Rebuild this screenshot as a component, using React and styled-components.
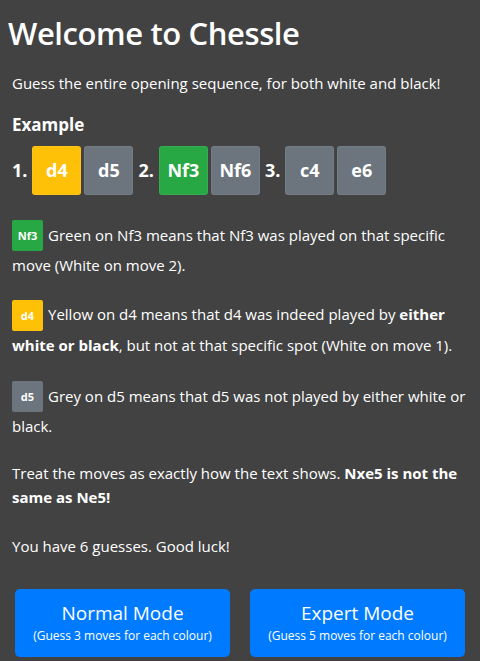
import React from "react";
import styled, { createGlobalStyle } from "styled-components";

const Global = createGlobalStyle`
  html, body { margin: 0; padding: 0; background: #424242; }
  body {
    font-family: "Open Sans", "Noto Sans", sans-serif;
    color: #ffffff;
    font-size: 15px;
    line-height: 1.6;
  }
`;

const Page = styled.div`
  width: 480px;
  min-height: 661px;
  box-sizing: border-box;
  padding: 12px 8px 0 12px;
  display: flex;
  flex-direction: column;
`;

const Title = styled.h1`
  margin: 0 0 0 -4px;
  font-size: 31px;
  font-weight: 600;
  line-height: 42px;
  letter-spacing: -0.4px;
`;

const Para = styled.p`
  margin: 0 0 ${(p) => p.$mb || "16px"} 0;
  font-size: 15px;
  line-height: ${(p) => p.$lh || "24px"};
`;

const Intro = styled(Para)`
  margin-top: 17px;
  margin-bottom: 17px;
`;

const Heading = styled.h3`
  margin: 0 0 8px 0;
  font-size: 17px;
  font-weight: 700;
  line-height: 26px;
`;

const MoveRow = styled.div`
  display: flex;
  align-items: center;
  gap: 3px;
  margin-bottom: 25px;
`;

const MoveNum = styled.span`
  font-size: 18px;
  font-weight: 700;
  margin-right: 2px;
  margin-left: ${(p) => (p.$first ? "0" : "2px")};
`;

const colors = {
  yellow: "#ffc107",
  grey: "#6c757d",
  green: "#28a745",
};

const Tile = styled.div`
  width: 49px;
  height: 49px;
  box-sizing: border-box;
  border-radius: 3px;
  border: 1px solid rgba(255, 255, 255, 0.06);
  background: ${(p) => colors[p.$c]};
  display: flex;
  align-items: center;
  justify-content: center;
  font-size: 18px;
  font-weight: 700;
  color: #fff;
`;

const Badge = styled.span`
  display: inline-flex;
  width: 31px;
  height: 31px;
  box-sizing: border-box;
  border-radius: 2px;
  background: ${(p) => colors[p.$c]};
  align-items: center;
  justify-content: center;
  font-size: 11px;
  font-weight: 700;
  line-height: 1;
  color: #fff;
  vertical-align: middle;
  margin: -2px 5px -2px 0;
  position: relative;
  top: -1px;
`;

const Buttons = styled.div`
  display: grid;
  grid-template-columns: 1fr 1fr;
  gap: 20px;
  padding: 0 7px 0 3px;
`;

const ModeButton = styled.button`
  height: 68px;
  border: none;
  border-radius: 5px;
  background: #007bff;
  color: #fff;
  font-family: inherit;
  display: flex;
  flex-direction: column;
  align-items: center;
  justify-content: center;
  padding: 0;
  cursor: pointer;
`;

const ModeTitle = styled.span`
  font-size: 19px;
  line-height: 26px;
`;

const ModeSub = styled.span`
  font-size: 12px;
  line-height: 20px;
`;

export default function App() {
  return (
    <>
      <Global />
      <Page>
        <Title>Welcome to Chessle</Title>
        <Intro>Guess the entire opening sequence, for both white and black!</Intro>
        <Heading>Example</Heading>
        <MoveRow>
          <MoveNum $first>1.</MoveNum>
          <Tile $c="yellow">d4</Tile>
          <Tile $c="grey">d5</Tile>
          <MoveNum>2.</MoveNum>
          <Tile $c="green">Nf3</Tile>
          <Tile $c="grey">Nf6</Tile>
          <MoveNum>3.</MoveNum>
          <Tile $c="grey">c4</Tile>
          <Tile $c="grey">e6</Tile>
        </MoveRow>
        <Para $lh="30px" $mb="19px">
          <Badge $c="green">Nf3</Badge>Green on Nf3 means that Nf3 was played on that specific move (White on move 2).
        </Para>
        <Para $lh="30px" $mb="21px">
          <Badge $c="yellow">d4</Badge>Yellow on d4 means that d4 was indeed played by <b>either white or black</b>, but not at that specific spot (White on move 1).
        </Para>
        <Para $lh="30px" $mb="20px">
          <Badge $c="grey">d5</Badge>Grey on d5 means that d5 was not played by either white or black.
        </Para>
        <Para $mb="25px">
          Treat the moves as exactly how the text shows. <b>Nxe5 is not the same as Ne5!</b>
        </Para>
        <Para $mb="31px">You have 6 guesses. Good luck!</Para>
        <Buttons>
          <ModeButton>
            <ModeTitle>Normal Mode</ModeTitle>
            <ModeSub>(Guess 3 moves for each colour)</ModeSub>
          </ModeButton>
          <ModeButton>
            <ModeTitle>Expert Mode</ModeTitle>
            <ModeSub>(Guess 5 moves for each colour)</ModeSub>
          </ModeButton>
        </Buttons>
      </Page>
    </>
  );
}
